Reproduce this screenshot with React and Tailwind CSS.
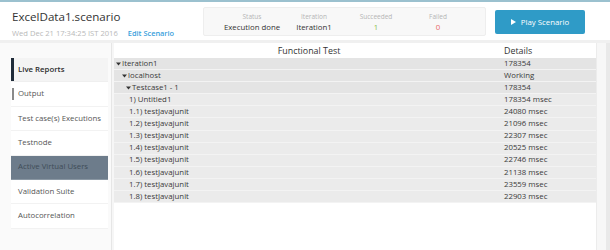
import React from "react";

const STATS = [
  { label: "Status", value: "Execution done", color: "text-[#333]" },
  { label: "Iteration", value: "Iteration1", color: "text-[#333]" },
  { label: "Succeeded", value: "1", color: "text-[#8bbf4a]" },
  { label: "Failed", value: "0", color: "text-[#e86a6a]" },
];

const MENU = [
  { id: "live", label: "Live Reports" },
  { id: "output", label: "Output" },
  { id: "tc", label: "Test case(s) Executions" },
  { id: "node", label: "Testnode" },
  { id: "avu", label: "Active Virtual Users" },
  { id: "val", label: "Validation Suite" },
  { id: "auto", label: "Autocorrelation" },
];

const ROWS = [
  { name: "Iteration1", detail: "178354", level: 0, open: true },
  { name: "localhost", detail: "Working", level: 1, open: true },
  { name: "Testcase1 - 1", detail: "178354", level: 2, open: true },
  { name: "1) Untitled1", detail: "178354 msec", level: 3 },
  { name: "1.1) testJavajunit", detail: "24080 msec", level: 3 },
  { name: "1.2) testJavajunit", detail: "21096 msec", level: 3 },
  { name: "1.3) testJavajunit", detail: "22307 msec", level: 3 },
  { name: "1.4) testJavajunit", detail: "20525 msec", level: 3 },
  { name: "1.5) testJavajunit", detail: "22746 msec", level: 3 },
  { name: "1.6) testJavajunit", detail: "21138 msec", level: 3 },
  { name: "1.7) testJavajunit", detail: "23559 msec", level: 3 },
  { name: "1.8) testJavajunit", detail: "22903 msec", level: 3 },
];

const INDENT = ["pl-[2px]", "pl-[8px]", "pl-[12px]", "pl-[15px]"];

const Caret = () => (
  <svg width="5" height="4" viewBox="0 0 5 4" className="mr-[1px] shrink-0">
    <path d="M0 0.5 L5 0.5 L2.5 3.5 Z" fill="#333" />
  </svg>
);

const Header = () => (
  <div className="h-[38px] bg-white flex items-start">
    <div className="w-[203px] pl-[12px] pt-[8px]">
      <div className="text-[11.6px] leading-[14px] text-[#333] whitespace-nowrap">
        ExcelData1.scenario
      </div>
      <div className="mt-[4px] flex items-center whitespace-nowrap leading-[10px]">
        <span className="text-[7.6px] text-[#b9b9b9]">Wed Dec 21 17:34:25 IST 2016</span>
        <span className="ml-[10px] text-[7.4px] font-semibold text-[#3a9fdc]">Edit Scenario</span>
      </div>
    </div>
    <div className="mt-[5px] w-[283px] h-[29px] bg-[#f8f8f8] border border-[#eeeeee] rounded-[2px] flex pl-[17px] pt-[5px]">
      {STATS.map((s) => (
        <div key={s.label} className="w-[62px] flex flex-col items-center whitespace-nowrap">
          <div className="text-[6.5px] leading-[8px] text-[#b5b5b5]">{s.label}</div>
          <div className={`mt-[1px] text-[7.8px] leading-[10px] ${s.color}`}>{s.value}</div>
        </div>
      ))}
    </div>
    <button className="ml-[9px] mt-[8px] w-[90px] h-[24px] bg-[#2f9bc7] rounded-[2px] flex items-center justify-center gap-[5px] text-white">
      <svg width="5" height="6" viewBox="0 0 5 6">
        <path d="M0 0 L5 3 L0 6 Z" fill="#fff" />
      </svg>
      <span className="text-[7.8px] leading-[10px]">Play Scenario</span>
    </button>
  </div>
);

const Sidebar = () => (
  <div className="w-[112px] shrink-0 bg-[#fafafa] border-r border-[#e6e6e6] pt-[15px]">
    <div className="ml-[11px] w-[97px]">
      {MENU.map((m) => {
        const active = m.id === "live";
        const dark = m.id === "avu";
        return (
          <div
            key={m.id}
            className={`relative h-[24.4px] flex items-center pl-[7px] border-b text-[7.8px] whitespace-nowrap ${
              dark
                ? "bg-[#6d7c8b] border-[#8a97a3] text-[#404c58]"
                : active
                ? "bg-[#f4f4f4] border-[#efefef] text-[#2c2c2c] font-semibold"
                : "bg-white border-[#f2f2f2] text-[#555]"
            }`}
          >
            {active && <span className="absolute left-0 top-0 bottom-0 w-[2.5px] bg-[#1f2b39]" />}
            {m.id === "output" && (
              <span className="absolute left-[0.5px] top-[6px] h-[12px] w-[2px] bg-[#8a8a8a]" />
            )}
            {m.label}
          </div>
        );
      })}
    </div>
  </div>
);

const Table = () => (
  <div className="w-[482px] shrink-0 bg-white">
    <div className="h-[15px] flex items-center text-[8.9px] text-[#333]">
      <div className="w-[390px] text-center">Functional Test</div>
      <div>Details</div>
    </div>
    {ROWS.map((r, i) => (
      <div
        key={r.name}
        className={`h-[12.1px] flex items-center border-b border-[#f3f3f3] text-[7.8px] text-[#3a3a3a] whitespace-nowrap ${
          i < 3 ? "bg-[#e4e4e4]" : "bg-[#ebebeb]"
        }`}
      >
        <div className={`w-[390px] flex items-center ${INDENT[r.level]}`}>
          {r.open && <Caret />}
          <span>{r.name}</span>
        </div>
        <div>{r.detail}</div>
      </div>
    ))}
  </div>
);

export default function App() {
  return (
    <div
      className="w-[610px] h-[250px] overflow-hidden bg-[#f0f0f0]"
      style={{ fontFamily: '"Open Sans", "Liberation Sans", sans-serif' }}
    >
      <div className="h-[2px] bg-[#9bc1cf]" />
      <Header />
      <div className="flex h-[210px] pt-[3px]">
        <Sidebar />
        <div className="w-[2px] bg-[#f6f6f6]" />
        <Table />
        <div className="w-[10px] bg-[#f7f7f7] border-l border-[#ececec]" />
        <div className="flex-1 bg-[#e9e9e9]" />
      </div>
    </div>
  );
}
